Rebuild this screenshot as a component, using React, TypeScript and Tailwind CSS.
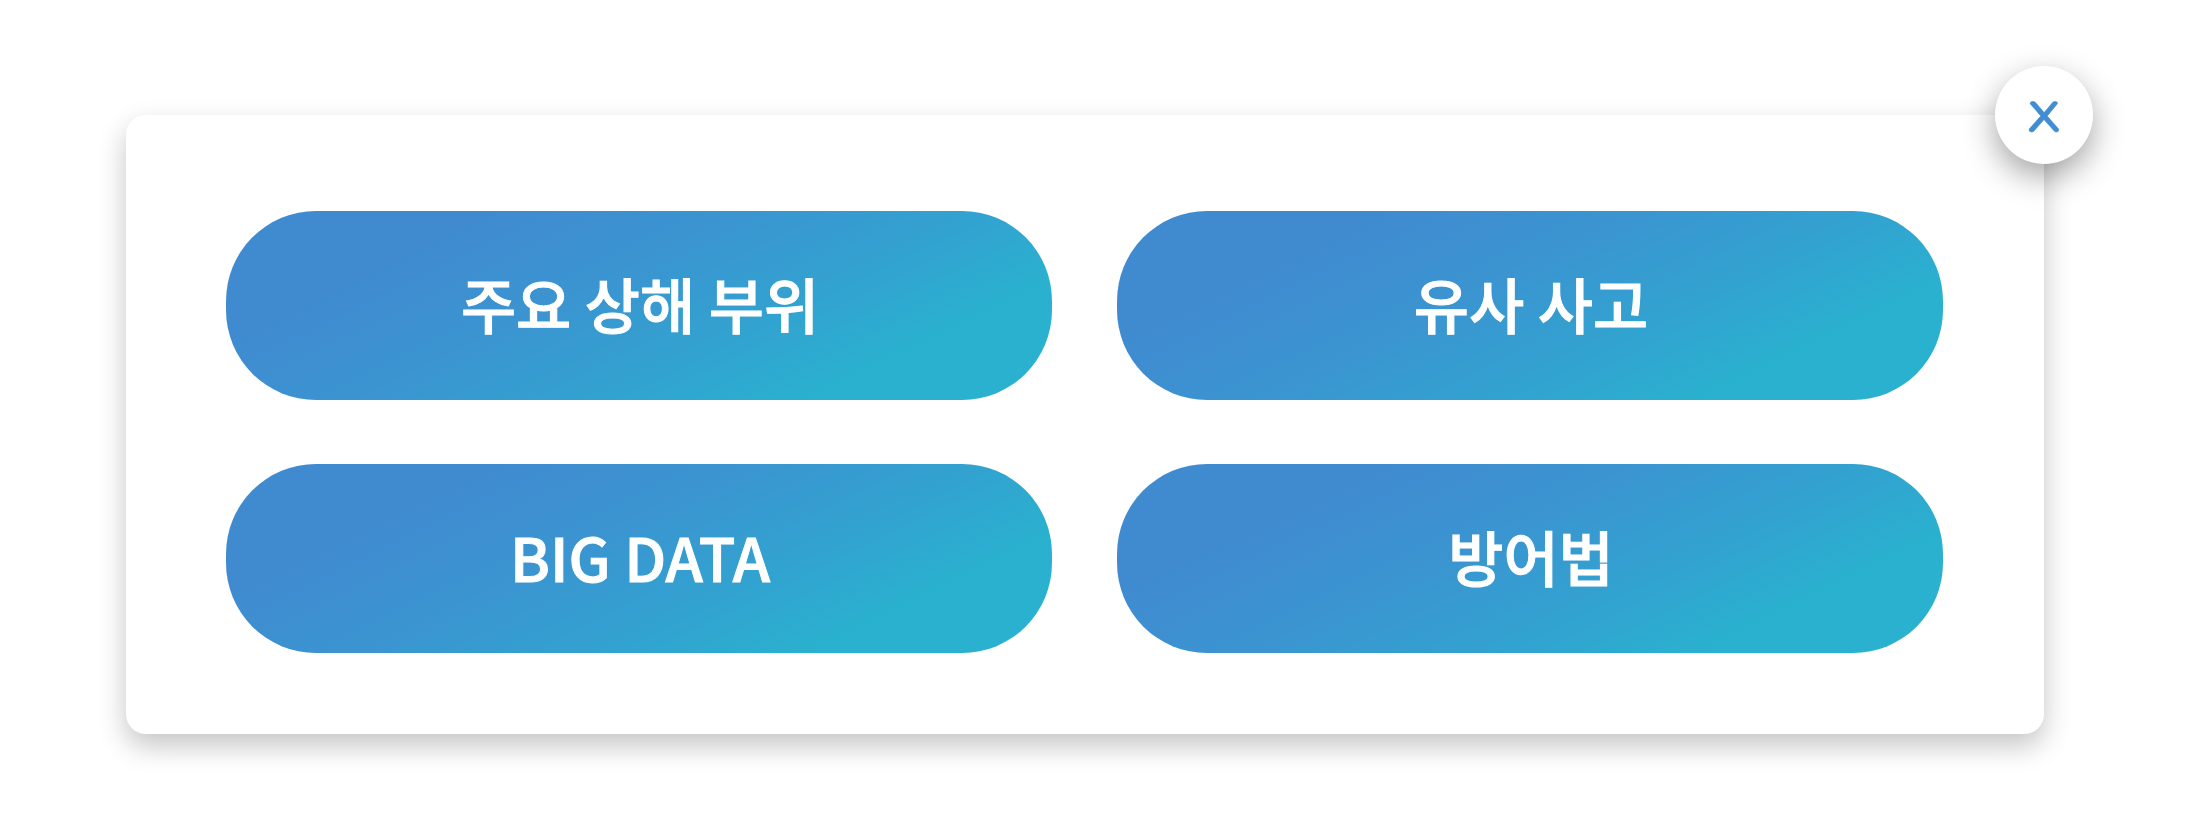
const items = ["주요 상해 부위", "유사 사고", "BIG DATA", "방어법"];

export default function App() {
  return (
    <main className="bg-white pt-[115px] pr-[154px] pb-[90px] pl-[126px] font-['Noto_Sans_CJK_KR',sans-serif]">
      <section className="relative rounded-[20px] bg-white pt-24 pr-[101px] pb-[81px] pl-[100px] shadow-[0_12px_28px_rgba(0,0,0,0.23)]">
        <div className="grid grid-cols-2 gap-x-[65px] gap-y-16">
          {items.map((label) => (
            <button
              key={label}
              type="button"
              className="flex h-[189px] items-center justify-center rounded-[90px] bg-[linear-gradient(154deg,#408bd0_22%,#3b94d0_42%,#31a4d0_65%,#2ab1cf_80%)] pb-1.5 pl-0.5 text-[60px] leading-none font-medium text-white [-webkit-text-stroke:1px_white]"
            >
              {label}
            </button>
          ))}
        </div>
        <button
          type="button"
          aria-label="닫기"
          className="absolute -top-[49px] -right-[49px] flex size-[98px] items-center justify-center rounded-full bg-white shadow-[0_12px_32px_rgba(0,0,0,0.36)]"
        >
          <svg viewBox="0 0 98 98" className="size-full" fill="#408dd2" stroke="#408dd2" strokeWidth="0.6">
            <path d="M35.2 37.8 Q35 35.6 37.2 35.5 H38.6 Q39.6 35.5 40.3 36.3 L49.2 46.6 L57.8 36.3 Q58.5 35.5 59.6 35.5 H60.6 Q62.8 35.6 62.4 37.8 L52.2 50 L63.4 62.8 Q64.6 65.8 61.4 66 Q60.2 66 59.4 65.2 L49 53.6 L38.8 65.2 Q38 66 36.4 66 Q33.4 65.8 34.2 63 L45.8 50 Z" />
          </svg>
        </button>
      </section>
    </main>
  );
}
